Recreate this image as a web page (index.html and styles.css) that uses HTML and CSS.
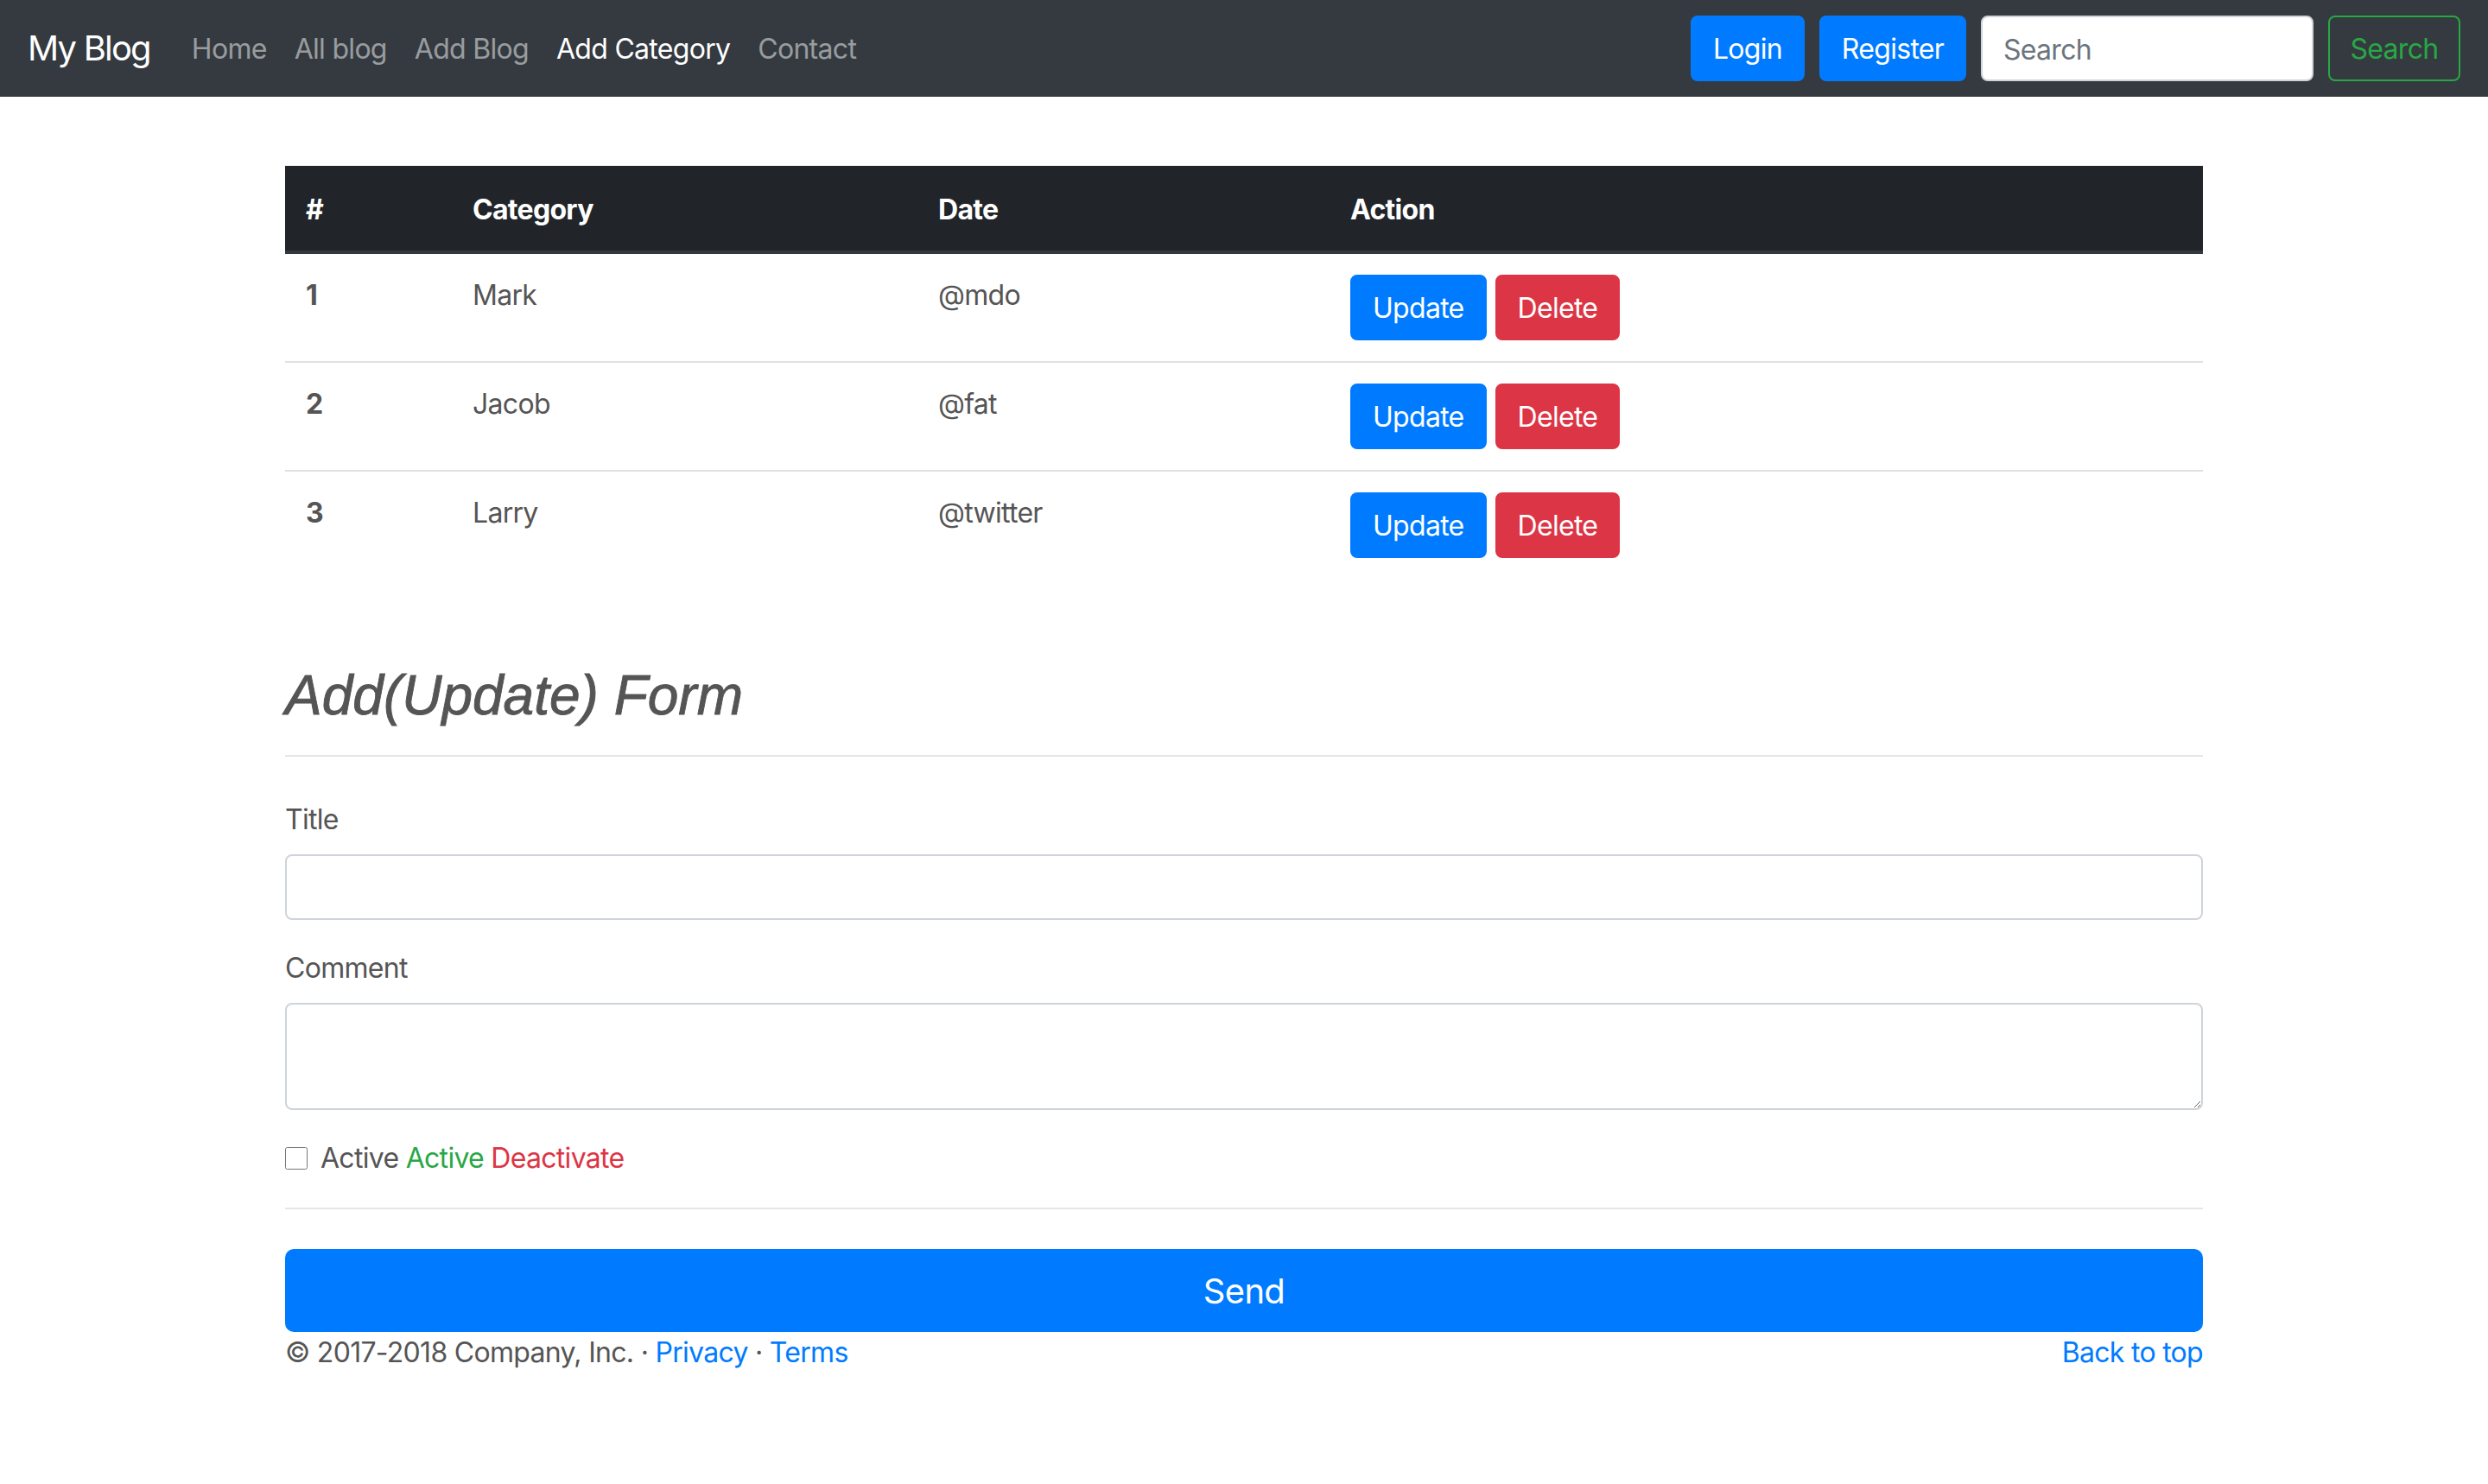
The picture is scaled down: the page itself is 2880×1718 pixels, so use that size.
FILE: index.html
```html
<!DOCTYPE html>
<html lang="en">
<head>
<meta charset="utf-8">
<title>My Blog - Add Category</title>
<link rel="stylesheet" href="styles.css">
</head>
<body>
<nav class="navbar">
  <a class="brand" href="#">My Blog</a>
  <ul class="nav-links">
    <li><a class="nav-link" href="#">Home</a></li>
    <li><a class="nav-link" href="#">All blog</a></li>
    <li><a class="nav-link" href="#">Add Blog</a></li>
    <li><a class="nav-link active" href="#">Add Category</a></li>
    <li><a class="nav-link" href="#">Contact</a></li>
  </ul>
  <div class="nav-right">
    <button class="btn btn-primary btn-login">Login</button>
    <button class="btn btn-primary btn-register">Register</button>
    <input class="search-input" type="text" placeholder="Search">
    <button class="btn btn-outline-success btn-search">Search</button>
  </div>
</nav>

<main class="container">
  <table class="table">
    <thead>
      <tr>
        <th class="c-num">#</th>
        <th class="c-cat">Category</th>
        <th class="c-date">Date</th>
        <th>Action</th>
      </tr>
    </thead>
    <tbody>
      <tr>
        <th class="row-num">1</th>
        <td>Mark</td>
        <td>@mdo</td>
        <td><div class="actions"><button class="btn btn-primary">Update</button><button class="btn btn-danger">Delete</button></div></td>
      </tr>
      <tr>
        <th class="row-num">2</th>
        <td>Jacob</td>
        <td>@fat</td>
        <td><div class="actions"><button class="btn btn-primary">Update</button><button class="btn btn-danger">Delete</button></div></td>
      </tr>
      <tr>
        <th class="row-num">3</th>
        <td>Larry</td>
        <td>@twitter</td>
        <td><div class="actions"><button class="btn btn-primary">Update</button><button class="btn btn-danger">Delete</button></div></td>
      </tr>
    </tbody>
  </table>

  <section class="form-section">
    <h2 class="form-title">Add(Update) Form</h2>
    <hr class="rule rule-top">
    <div class="form-group first">
      <label class="form-label" for="title">Title</label>
      <input class="form-control" id="title" type="text">
    </div>
    <div class="form-group">
      <label class="form-label" for="comment">Comment</label>
      <textarea class="form-control textarea" id="comment" rows="2"></textarea>
    </div>
    <div class="form-check">
      <input class="check" type="checkbox" id="active">
      <label for="active">Active <span class="text-success">Active</span> <span class="text-danger">Deactivate</span></label>
    </div>
    <hr class="rule rule-bottom">
    <button class="btn btn-primary btn-lg btn-block">Send</button>
  </section>

  <footer class="footer">
    <p>&copy; 2017-2018 Company, Inc. &middot; <a href="#">Privacy</a> &middot; <a href="#">Terms</a></p>
    <p><a href="#">Back to top</a></p>
  </footer>
</main>
</body>
</html>
```

FILE: styles.css
```css
* { box-sizing: border-box; }

html, body {
  margin: 0;
  padding: 0;
  background: #fff;
}

body {
  font-family: Inter, Roboto, "Liberation Sans", sans-serif;
  font-size: 32px;
  line-height: 1.5;
  letter-spacing: -0.022em;
  color: #555;
}

a { color: #007bff; text-decoration: none; }

/* Navbar */
.navbar {
  display: flex;
  align-items: center;
  height: 112px;
  padding: 0 32px;
  background: #343a40;
}

.brand {
  font-size: 40px;
  line-height: 1.5;
  letter-spacing: -0.045em;
  color: #fff;
  margin-right: 32px;
  white-space: nowrap;
}

.nav-links {
  display: flex;
  list-style: none;
  margin: 0;
  padding: 2px 0 0;
}

.nav-link {
  display: block;
  padding: 0 16px;
  color: rgba(255, 255, 255, 0.5);
  white-space: nowrap;
}

.nav-link.active { color: #fff; }

.nav-right {
  margin-left: auto;
  display: flex;
  align-items: center;
  gap: 17px;
}

/* Buttons */
.btn {
  font-family: inherit;
  font-size: 32px;
  line-height: 1.5;
  letter-spacing: inherit;
  height: 76px;
  padding: 2px 24px 0;
  border: 2px solid transparent;
  border-radius: 8px;
  cursor: pointer;
  white-space: nowrap;
}

.btn-primary { background: #007bff; border-color: #007bff; color: #fff; }
.btn-danger { background: #dc3545; border-color: #dc3545; color: #fff; }
.btn-outline-success { background: transparent; border-color: #28a745; color: #28a745; }

.btn-login { width: 132px; padding: 2px 0 0; }
.btn-register { width: 170px; padding: 2px 0 0; }
.btn-search { width: 153px; padding: 2px 0 0; }

.search-input {
  width: 385px;
  height: 76px;
  padding: 2px 24px 0;
  font-family: inherit;
  font-size: 32px;
  letter-spacing: inherit;
  color: #495057;
  background: #fff;
  border: 2px solid #ced4da;
  border-radius: 8px;
  outline: none;
}

.search-input::placeholder { color: #6c757d; }

/* Container */
.container {
  width: 2220px;
  margin: 0 auto;
  padding-top: 80px;
}

/* Table */
.table {
  width: 100%;
  border-collapse: collapse;
  table-layout: fixed;
}

.table th,
.table td {
  padding: 24px;
  text-align: left;
  vertical-align: top;
}

.table thead th {
  background: #212529;
  color: #fff;
  font-weight: 700;
  padding-top: 27px;
  padding-bottom: 23px;
  border-bottom: 4px solid #32383e;
  vertical-align: bottom;
}

.table tbody th,
.table tbody td {
  border-top: 2px solid #dee2e6;
}

.table tbody tr:first-child th,
.table tbody tr:first-child td { border-top: none; }

.c-num { width: 193px; }
.c-cat { width: 539px; }
.c-date { width: 477px; }

.row-num { font-weight: 700; }

.actions {
  display: flex;
  gap: 10px;
}

/* Form */
.form-section {
  margin-top: 97px;
}

.form-title {
  margin: 0;
  font-family: "Liberation Sans", Arial, sans-serif;
  font-style: italic;
  font-weight: 400;
  font-size: 64px;
  line-height: 1.2;
  letter-spacing: 0;
  color: #555;
  -webkit-text-stroke: 0.9px #555;
}

.rule {
  margin: 0;
  border: 0;
  border-top: 2px solid rgba(0, 0, 0, 0.1);
}

.rule-top { margin-top: 30px; }

.form-group { margin-top: 32px; }
.form-group.first { margin-top: 49px; }

.form-label {
  display: block;
  margin-bottom: 16px;
}

.form-control {
  display: block;
  width: 100%;
  height: 76px;
  padding: 12px 24px;
  font-family: inherit;
  font-size: 32px;
  line-height: 1.5;
  color: #495057;
  background: #fff;
  border: 2px solid #ced4da;
  border-radius: 8px;
  outline: none;
}

.textarea {
  height: 124px;
  resize: vertical;
}

.form-check {
  display: flex;
  align-items: center;
  margin-top: 32px;
  height: 48px;
}

.check {
  width: 26px;
  height: 26px;
  margin: 0 15px 0 0;
}

.text-success { color: #28a745; }
.text-danger { color: #dc3545; }

.rule-bottom { margin-top: 33px; }

.btn-lg {
  height: 96px;
  font-size: 40px;
  border-radius: 10px;
}

.btn-block {
  display: block;
  width: 100%;
  margin-top: 46px;
}

/* Footer */
.footer {
  display: flex;
  justify-content: space-between;
}

.footer p { margin: 0; }
```
